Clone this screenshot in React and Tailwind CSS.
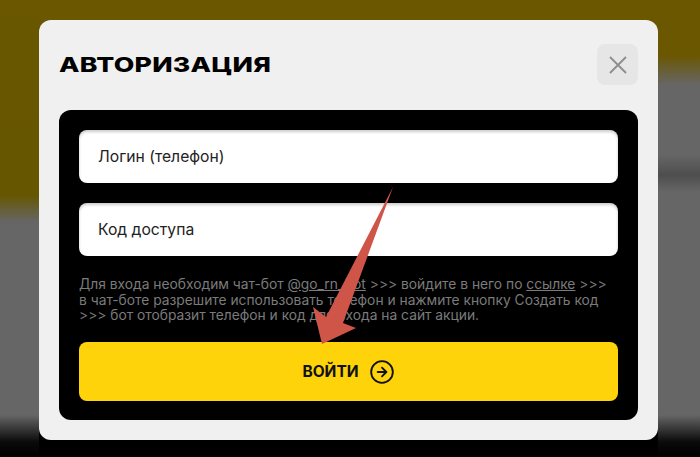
import { CircleArrowRight } from "lucide-react";

function Field({ label }) {
  return (
    <div className="h-[53px] rounded-lg bg-white pl-[19px] pt-px flex items-center text-[15.7px] text-[#222] shadow-[inset_0_2px_3px_rgba(0,0,0,0.2)]">
      {label}
    </div>
  );
}

export default function App() {
  return (
    <div className="flex w-[700px] h-[457px] overflow-hidden font-['Inter',sans-serif]">
      {/* Left strip of the blurred page */}
      <div className="w-[39px] h-full bg-[linear-gradient(to_bottom,#6a5700_0px,#665600_195px,#666666_222px,#666666_415px,#0a0a0a_442px,#000000_457px)]" />

      {/* Modal column */}
      <div className="relative w-[619px] h-full pt-5 bg-[linear-gradient(to_bottom,#6a5700_0px,#6a5700_20px,#000000_440px,#000000_457px)]">
        <div className="w-[619px] h-[420px] rounded-xl bg-[#f0f0f0] p-5">
          <div className="flex justify-between h-[70px] pt-1">
            <h1 className="h-[41px] pt-[2px] flex items-center text-[20.5px] font-extrabold text-black tracking-[0.2px] origin-left scale-x-[1.3]">
              АВТОРИЗАЦИЯ
            </h1>
            <button className="w-[41px] h-[41px] rounded-lg bg-[#e6e6e6] flex items-center justify-center">
              <svg width="18" height="18" viewBox="0 0 18 18" fill="none" stroke="#8c8c8c" strokeWidth="1.8">
                <path d="M1 1L17 17M17 1L1 17" />
              </svg>
            </button>
          </div>

          <div className="h-[310px] rounded-xl bg-black p-5">
            <div className="flex flex-col gap-5">
              <Field label="Логин (телефон)" />
              <Field label="Код доступа" />
            </div>
            <p className="mt-[21px] text-[13.8px] leading-[15.5px] text-[#7b7b7b]">
              Для входа необходим чат-бот <span className="underline">@go_rn_bot</span> &gt;&gt;&gt; войдите в него по <span className="underline">ссылке</span> &gt;&gt;&gt; в чат-боте разрешите использовать телефон и нажмите кнопку Создать код &gt;&gt;&gt; бот отобразит телефон и код для входа на сайт акции.
            </p>
            <button className="mt-[18px] w-full h-[59px] pt-[2px] rounded-lg bg-[#ffd30a] flex items-center justify-center gap-[10px] text-[15.5px] font-bold text-[#111]">
              ВОЙТИ
              <CircleArrowRight size={26} strokeWidth={1.7} />
            </button>
          </div>
        </div>

        {/* Red annotation arrow */}
        <svg className="absolute -left-[39px] top-0 pointer-events-none" width="700" height="457" viewBox="0 0 700 457">
          <path d="M322 344L313 307L326 317L393 187L343 323L356 328Z" fill="#cf5549" />
        </svg>
      </div>

      {/* Right strip of the blurred page */}
      <div className="flex-1 h-full bg-[linear-gradient(to_bottom,#6a5700_0px,#6a5700_55px,#666666_85px,#666666_155px,#4e4e4e_175px,#666666_192px,#666666_415px,#0a0a0a_442px,#000000_457px)]" />
    </div>
  );
}
